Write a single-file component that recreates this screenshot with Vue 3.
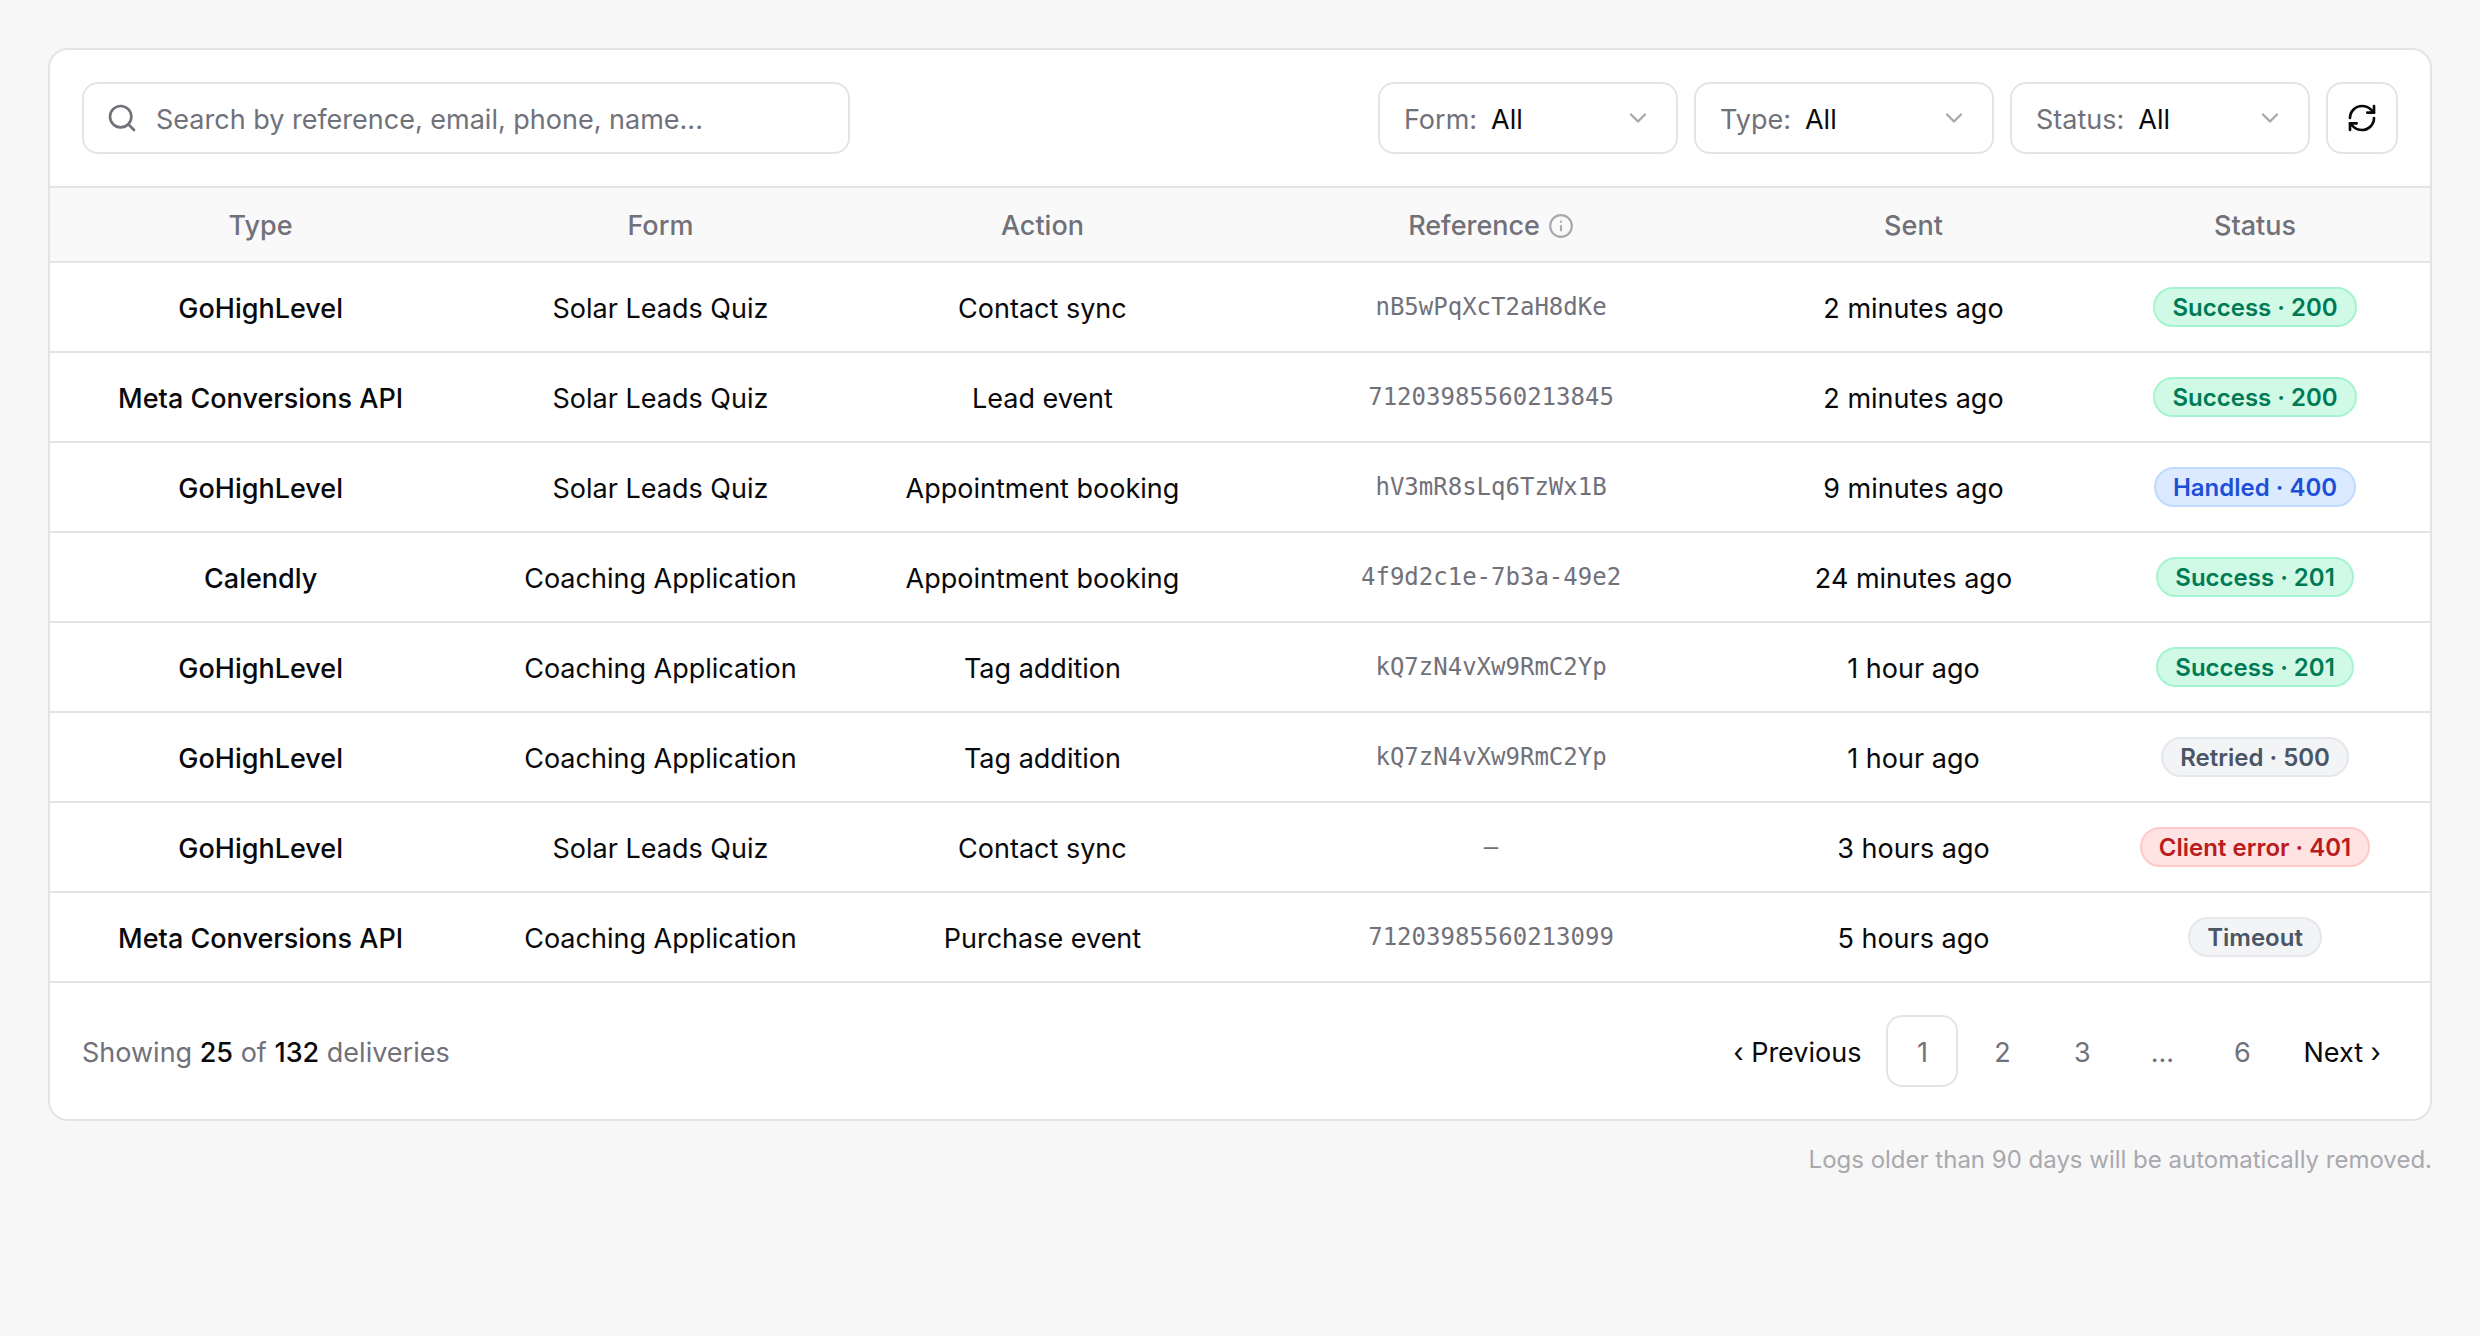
<script setup>
import { ref } from 'vue'

const query = ref('')

const filters = [
  { id: 'form', label: 'Form:', options: ['All', 'Solar Leads Quiz', 'Coaching Application'] },
  { id: 'type', label: 'Type:', options: ['All', 'GoHighLevel', 'Meta Conversions API', 'Calendly'] },
  { id: 'status', label: 'Status:', options: ['All', 'Success', 'Handled', 'Retried', 'Client error', 'Timeout'] },
]

const deliveries = [
  { type: 'GoHighLevel', form: 'Solar Leads Quiz', action: 'Contact sync', reference: 'nB5wPqXcT2aH8dKe', sent: '2 minutes ago', status: 'Success · 200', tone: 'green' },
  { type: 'Meta Conversions API', form: 'Solar Leads Quiz', action: 'Lead event', reference: '71203985560213845', sent: '2 minutes ago', status: 'Success · 200', tone: 'green' },
  { type: 'GoHighLevel', form: 'Solar Leads Quiz', action: 'Appointment booking', reference: 'hV3mR8sLq6TzWx1B', sent: '9 minutes ago', status: 'Handled · 400', tone: 'blue' },
  { type: 'Calendly', form: 'Coaching Application', action: 'Appointment booking', reference: '4f9d2c1e-7b3a-49e2', sent: '24 minutes ago', status: 'Success · 201', tone: 'green' },
  { type: 'GoHighLevel', form: 'Coaching Application', action: 'Tag addition', reference: 'kQ7zN4vXw9RmC2Yp', sent: '1 hour ago', status: 'Success · 201', tone: 'green' },
  { type: 'GoHighLevel', form: 'Coaching Application', action: 'Tag addition', reference: 'kQ7zN4vXw9RmC2Yp', sent: '1 hour ago', status: 'Retried · 500', tone: 'gray' },
  { type: 'GoHighLevel', form: 'Solar Leads Quiz', action: 'Contact sync', reference: '', sent: '3 hours ago', status: 'Client error · 401', tone: 'red' },
  { type: 'Meta Conversions API', form: 'Coaching Application', action: 'Purchase event', reference: '71203985560213099', sent: '5 hours ago', status: 'Timeout', tone: 'gray' },
]

const pages = ['1', '2', '3', '...', '6']
</script>

<template>
  <main class="page">
    <section class="card">
      <div class="toolbar">
        <label class="search">
          <svg class="search-icon" viewBox="0 0 24 24" aria-hidden="true">
            <circle cx="11" cy="11" r="8" />
            <path d="m21 21-4.3-4.3" />
          </svg>
          <input v-model="query" type="text" aria-label="Search deliveries" placeholder="Search by reference, email, phone, name..." />
        </label>
        <div class="filters">
          <div v-for="filter in filters" :key="filter.id" class="filter">
            <label :for="filter.id">{{ filter.label }}</label>
            <select :id="filter.id">
              <option v-for="option in filter.options" :key="option">{{ option }}</option>
            </select>
            <svg class="chevron" viewBox="0 0 24 24" aria-hidden="true"><path d="m6 9 6 6 6-6" /></svg>
          </div>
          <button class="refresh" type="button" aria-label="Refresh">
            <svg viewBox="0 0 24 24" aria-hidden="true">
              <path d="M3 12a9 9 0 0 1 9-9 9.75 9.75 0 0 1 6.74 2.74L21 8" />
              <path d="M21 3v5h-5" />
              <path d="M21 12a9 9 0 0 1-9 9 9.75 9.75 0 0 1-6.74-2.74L3 16" />
              <path d="M8 16H3v5" />
            </svg>
          </button>
        </div>
      </div>

      <table>
        <colgroup>
          <col class="col-type" />
          <col class="col-form" />
          <col class="col-action" />
          <col class="col-reference" />
          <col class="col-sent" />
          <col class="col-status" />
        </colgroup>
        <thead>
          <tr>
            <th scope="col">Type</th>
            <th scope="col">Form</th>
            <th scope="col">Action</th>
            <th scope="col">
              <span class="with-info">
                Reference
                <svg viewBox="0 0 24 24" aria-hidden="true">
                  <circle cx="12" cy="12" r="10" />
                  <path d="M12 16v-4M12 8h.01" />
                </svg>
              </span>
            </th>
            <th scope="col">Sent</th>
            <th scope="col">Status</th>
          </tr>
        </thead>
        <tbody>
          <tr v-for="(row, index) in deliveries" :key="index">
            <td class="type">{{ row.type }}</td>
            <td>{{ row.form }}</td>
            <td>{{ row.action }}</td>
            <td class="reference">
              <code>{{ row.reference || '–' }}</code>
            </td>
            <td>{{ row.sent }}</td>
            <td class="status"><span class="badge" :class="row.tone">{{ row.status }}</span></td>
          </tr>
        </tbody>
      </table>

      <div class="footer">
        <p class="summary">Showing <strong>25</strong> of <strong>132</strong> deliveries</p>
        <nav class="pager" aria-label="Pagination">
          <button class="step" type="button">‹ Previous</button>
          <template v-for="page in pages" :key="page">
            <span v-if="page === '...'" class="page-item">{{ page }}</span>
            <button v-else class="page-item" :class="{ current: page === '1' }" type="button">{{ page }}</button>
          </template>
          <button class="step" type="button">Next ›</button>
        </nav>
      </div>
    </section>
    <p class="note">Logs older than 90 days will be automatically removed.</p>
  </main>
</template>

<style>
body {
  background: #f7f7f7;
}
</style>

<style scoped>
.page {
  padding: 48px;
  font-family: Inter, sans-serif;
  font-size: 27px;
  line-height: 40px;
  color: #09090b;
}

.page * {
  box-sizing: border-box;
}

.card {
  background: #fff;
  border: 2px solid #e4e4e4;
  border-radius: 20px;
  overflow: hidden;
}

input,
select,
button {
  margin: 0;
  padding: 0;
  border: 0;
  background: none;
  font: inherit;
  color: inherit;
}

svg {
  flex: none;
  fill: none;
  stroke: currentColor;
  stroke-width: 2;
  stroke-linecap: round;
  stroke-linejoin: round;
}

p {
  margin: 0;
}

.toolbar,
.footer {
  display: flex;
  align-items: center;
  justify-content: space-between;
  gap: 16px;
  padding: 32px;
}

.search,
.filter,
.refresh {
  display: flex;
  align-items: center;
  height: 72px;
  border: 2px solid #e4e4e4;
  border-radius: 16px;
}

.search {
  flex: 0 1 768px;
  gap: 18px;
  padding: 0 22px;
  color: #71717a;
}

.search-icon {
  width: 32px;
  height: 32px;
}

.search input {
  flex: 1;
  min-width: 0;
  padding-top: 3px;
  outline: none;
}

.search input::placeholder {
  color: #71717a;
  opacity: 1;
}

.filters {
  display: flex;
  gap: 16px;
}

.filter {
  width: 300px;
  gap: 14px;
  padding: 0 24px;
}

.filter label,
.filter select {
  padding-top: 3px;
}

.filter label {
  color: #71717a;
}

.filter select {
  flex: 1;
  min-width: 0;
  appearance: none;
  outline: none;
}

.chevron {
  width: 28px;
  height: 28px;
  color: #a8a8ae;
}

.refresh {
  justify-content: center;
  width: 72px;
}

.refresh svg {
  width: 32px;
  height: 32px;
}

table {
  width: 100%;
  table-layout: fixed;
  border-collapse: separate;
  border-spacing: 0;
  border-top: 2px solid #e4e4e4;
  text-align: center;
}

.col-type { width: 17.7%; }
.col-form { width: 15.9%; }
.col-action { width: 16.2%; }
.col-reference { width: 21.5%; }
.col-sent { width: 14%; }
.col-status { width: 14.7%; }

th,
td {
  padding: 3px 16px 0;
  border-bottom: 2px solid #e4e4e4;
  white-space: nowrap;
}

th {
  height: 75px;
  background: #f9f9f9;
  font-weight: 500;
  color: #71717a;
}

td {
  height: 90px;
}

.with-info {
  display: inline-flex;
  align-items: center;
  gap: 8px;
  vertical-align: top;
}

.with-info svg {
  width: 26px;
  height: 26px;
  color: #a8a8ae;
}

.type {
  font-weight: 500;
}

.reference,
.status {
  padding-top: 0;
}

code {
  display: block;
  font-family: "DejaVu Sans Mono", monospace;
  font-size: 24px;
  color: #71717a;
}

.badge {
  display: block;
  width: fit-content;
  margin: 0 auto;
  padding: 2px 17px 0;
  border: 2px solid;
  border-radius: 20px;
  font-size: 24px;
  font-weight: 600;
  line-height: 34px;
}

.green {
  background: #d0fae5;
  border-color: #a4f4cf;
  color: #007a55;
}

.blue {
  background: #dbeafe;
  border-color: #bedbff;
  color: #1d4fd8;
}

.gray {
  background: #f3f4f6;
  border-color: #e5e7eb;
  color: #4a5565;
}

.red {
  background: #ffe2e2;
  border-color: #ffc9c9;
  color: #b91c1c;
}

.summary {
  padding-top: 3px;
  color: #71717a;
}

.summary strong {
  font-weight: 500;
  color: #09090b;
}

.pager {
  display: flex;
  align-items: center;
  gap: 8px;
}

.step {
  padding: 3px 17px 0;
}

.page-item {
  display: flex;
  align-items: center;
  justify-content: center;
  width: 72px;
  height: 72px;
  padding-top: 3px;
  border: 2px solid transparent;
  border-radius: 16px;
  color: #71717a;
}

.current {
  border-color: #e4e4e4;
}

.note {
  padding-top: 19px;
  font-size: 24px;
  text-align: right;
  color: #a8a8ae;
}
</style>
